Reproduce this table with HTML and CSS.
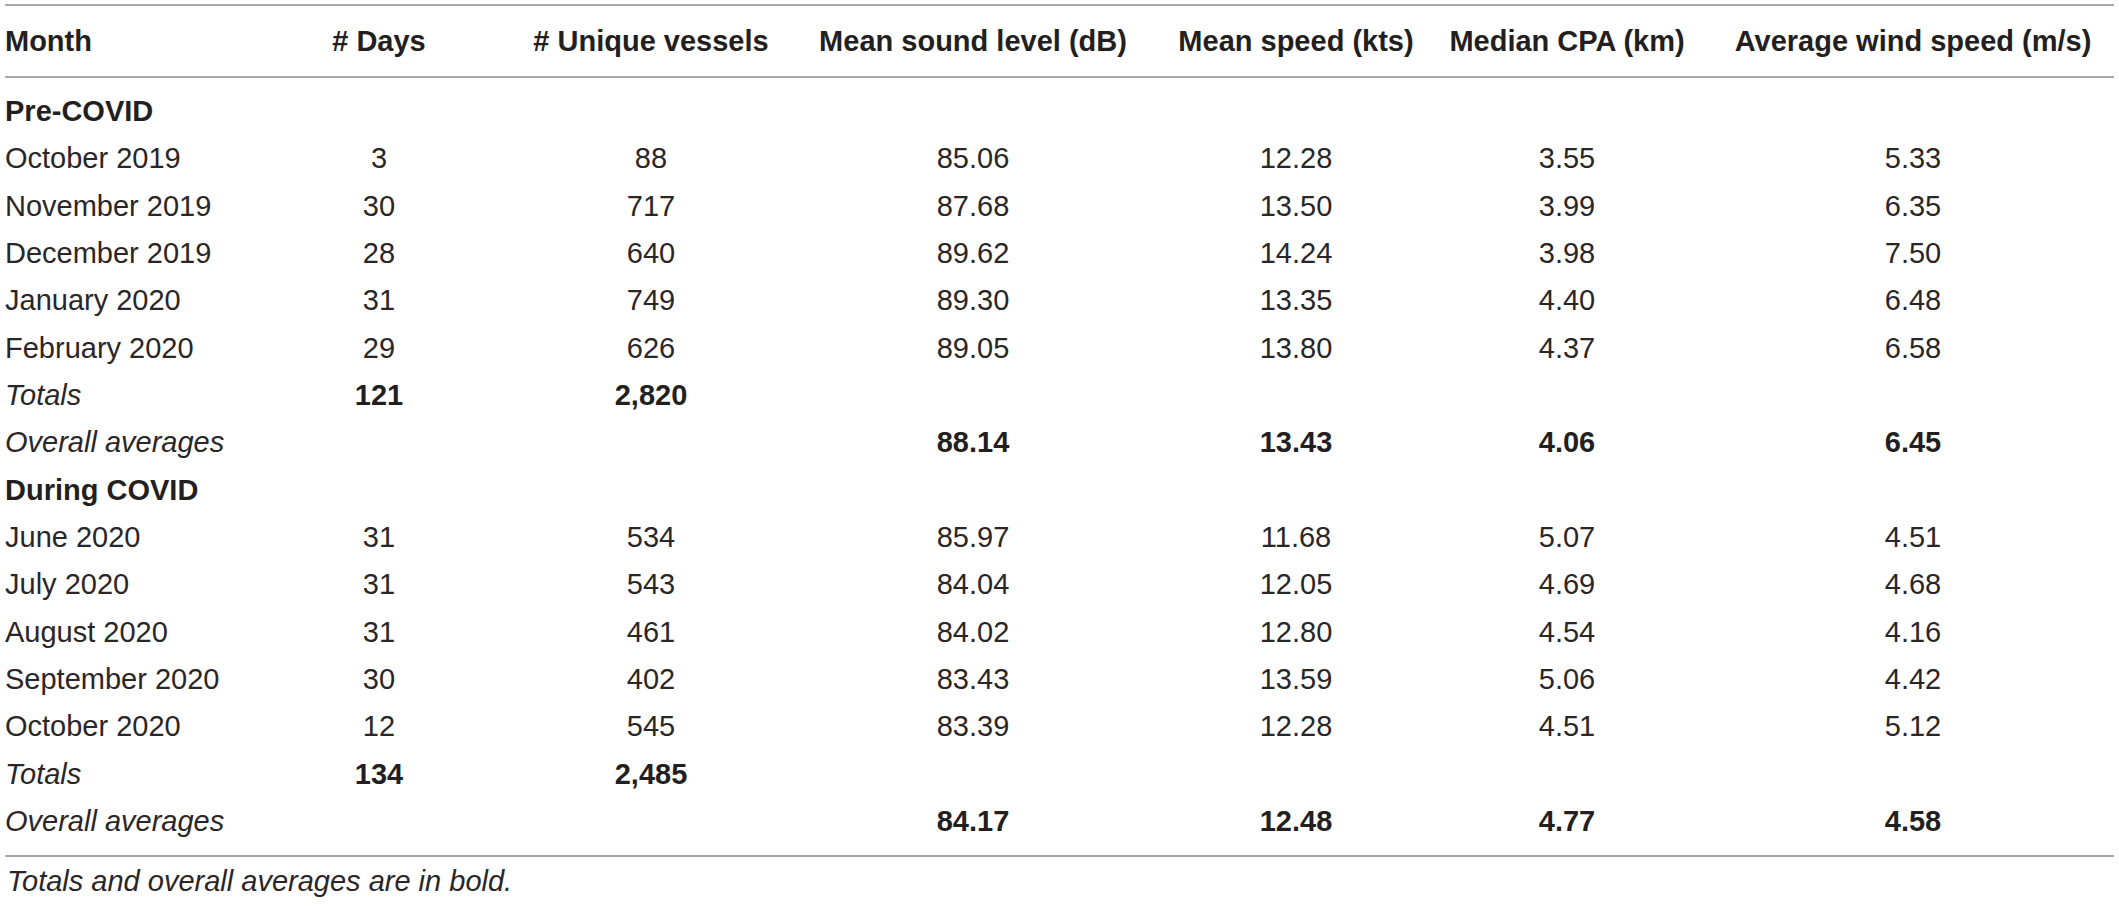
FILE: index.html
```html
<!DOCTYPE html>
<html lang="en">
<head>
    <meta charset="UTF-8">
    <title>Monthly vessel and sound statistics</title>
    <link rel="stylesheet" href="styles.css">
</head>
<body>
    <table class="stats">
        <colgroup>
            <col class="c-month">
            <col class="c-days">
            <col class="c-vessels">
            <col class="c-sound">
            <col class="c-speed">
            <col class="c-cpa">
            <col class="c-wind">
        </colgroup>
        <thead>
            <tr>
                <th class="label">Month</th>
                <th># Days</th>
                <th># Unique vessels</th>
                <th>Mean sound level (dB)</th>
                <th>Mean speed (kts)</th>
                <th>Median CPA (km)</th>
                <th>Average wind speed (m/s)</th>
            </tr>
        </thead>
        <tbody>
            <tr class="section first">
                <td class="label" colspan="7">Pre-COVID</td>
            </tr>
            <tr><td class="label">October 2019</td><td>3</td><td>88</td><td>85.06</td><td>12.28</td><td>3.55</td><td>5.33</td></tr>
            <tr><td class="label">November 2019</td><td>30</td><td>717</td><td>87.68</td><td>13.50</td><td>3.99</td><td>6.35</td></tr>
            <tr><td class="label">December 2019</td><td>28</td><td>640</td><td>89.62</td><td>14.24</td><td>3.98</td><td>7.50</td></tr>
            <tr><td class="label">January 2020</td><td>31</td><td>749</td><td>89.30</td><td>13.35</td><td>4.40</td><td>6.48</td></tr>
            <tr><td class="label">February 2020</td><td>29</td><td>626</td><td>89.05</td><td>13.80</td><td>4.37</td><td>6.58</td></tr>
            <tr class="summary"><td class="label">Totals</td><td>121</td><td>2,820</td><td></td><td></td><td></td><td></td></tr>
            <tr class="summary"><td class="label">Overall averages</td><td></td><td></td><td>88.14</td><td>13.43</td><td>4.06</td><td>6.45</td></tr>

            <tr class="section">
                <td class="label" colspan="7">During COVID</td>
            </tr>
            <tr><td class="label">June 2020</td><td>31</td><td>534</td><td>85.97</td><td>11.68</td><td>5.07</td><td>4.51</td></tr>
            <tr><td class="label">July 2020</td><td>31</td><td>543</td><td>84.04</td><td>12.05</td><td>4.69</td><td>4.68</td></tr>
            <tr><td class="label">August 2020</td><td>31</td><td>461</td><td>84.02</td><td>12.80</td><td>4.54</td><td>4.16</td></tr>
            <tr><td class="label">September 2020</td><td>30</td><td>402</td><td>83.43</td><td>13.59</td><td>5.06</td><td>4.42</td></tr>
            <tr><td class="label">October 2020</td><td>12</td><td>545</td><td>83.39</td><td>12.28</td><td>4.51</td><td>5.12</td></tr>
            <tr class="summary"><td class="label">Totals</td><td>134</td><td>2,485</td><td></td><td></td><td></td><td></td></tr>
            <tr class="summary last"><td class="label">Overall averages</td><td></td><td></td><td>84.17</td><td>12.48</td><td>4.77</td><td>4.58</td></tr>
        </tbody>
    </table>

    <p class="note">Totals and overall averages are in bold.</p>
</body>
</html>
```

FILE: styles.css
```css
body {
    margin: 0;
    padding: 4px 0 0 5px;
    background: #ffffff;
    color: #231f20;
    font-family: "Liberation Sans", Arial, sans-serif;
    font-size: 29px;
}

.stats {
    width: 2109px;
    table-layout: fixed;
    border-collapse: separate;
    border-spacing: 0;
    border-top: 2px solid #a8a8a8;
}

/* column widths: each number is centred under its header */
.c-month { width: 227px; }
.c-days { width: 294px; }
.c-vessels { width: 250px; }
.c-sound { width: 394px; }
.c-speed { width: 252px; }
.c-cpa { width: 290px; }
.c-wind { width: 402px; }

.stats th,
.stats td {
    padding: 0;
    text-align: center;
    white-space: nowrap;
}

.stats th {
    line-height: 70px;
    font-weight: bold;
    border-bottom: 2px solid #a8a8a8;
}

.stats td {
    line-height: 47.33px;
    font-weight: normal;
    color: #2a2627;
}

.stats .label { text-align: left; }

.stats tr.section td { font-weight: bold; color: #231f20; }
.stats tr.first td { padding-top: 10px; }
.stats tr.last td { padding-bottom: 10px; border-bottom: 2px solid #a8a8a8; }

.stats tr.summary td { font-weight: bold; color: #231f20; }
.stats tr.summary td.label { font-weight: normal; font-style: italic; color: #2a2627; }

.note {
    margin: 7px 0 0 2px;
    font-style: italic;
    line-height: 34px;
    color: #2a2627;
}
```
